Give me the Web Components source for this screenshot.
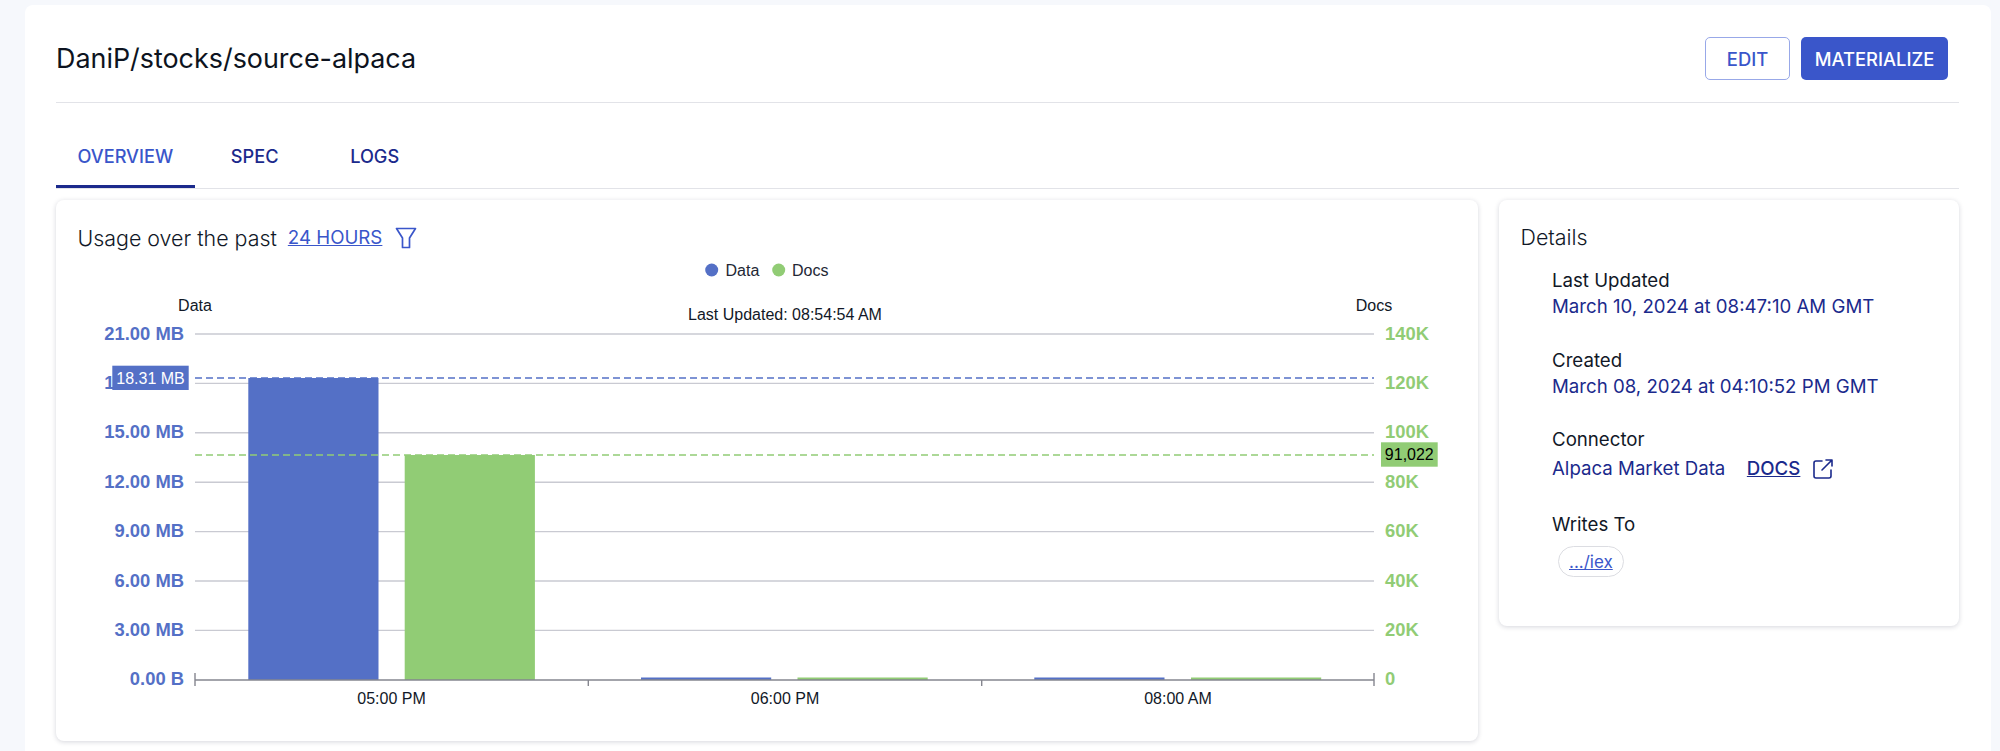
<!DOCTYPE html>
<html lang="en">
<head>
<meta charset="utf-8">
<title>DaniP/stocks/source-alpaca</title>
<style>
  html, body { margin: 0; height: 751px; overflow: hidden; background: #f6f8fc; }
  body { font-family: Inter, "Liberation Sans", sans-serif; color: #111827; }
</style>
</head>
<body>
<dp-page>
  <dp-title-bar>
    DaniP/stocks/source-alpaca
    <dp-button slot="actions" variant="outlined">EDIT</dp-button>
    <dp-button slot="actions" variant="contained">MATERIALIZE</dp-button>
  </dp-title-bar>
  <dp-tabs>
    <dp-tab active>OVERVIEW</dp-tab>
    <dp-tab>SPEC</dp-tab>
    <dp-tab>LOGS</dp-tab>
  </dp-tabs>
  <dp-columns>
    <dp-card>
      <dp-usage-title>Usage over the past</dp-usage-title>
      <dp-usage-chart></dp-usage-chart>
    </dp-card>
    <dp-card slot="side" style="height: 426px">
      <dp-details></dp-details>
    </dp-card>
  </dp-columns>
</dp-page>

<script>
/**
 * Small helper, defines a custom element with an open shadow root from markup.
 *
 * @param {string} name - The tag name.
 * @param {string} html - The shadow markup.
 */
function define (name, html) {
  const template = document.createElement('template')
  template.innerHTML = html
  customElements.define(name, class extends HTMLElement {
    constructor () {
      super()
      this.attachShadow({ mode: 'open' })
        .appendChild(template.content.cloneNode(true))
    }
  })
}

define('dp-page', `
  <style>
    :host {
      display: block;
      box-sizing: border-box;
      margin: 5px 9.5px 0 24.5px;
      height: 746px;
      padding: 0 31.5px;
      background: #fff;
      border-radius: 8px 8px 0 0;
    }
  </style>
  <slot></slot>
`)

define('dp-title-bar', `
  <style>
    :host {
      display: flex;
      align-items: center;
      justify-content: space-between;
      height: 98px;
      box-sizing: border-box;
      padding: 10px 11px 0 0;
      border-bottom: 1.5px solid #e2e3e8;
    }
    h1 { margin: 0 0 2px; font: 400 26.9px Inter, sans-serif; color: #0d1320; }
    .actions { display: flex; gap: 11px; }
  </style>
  <h1><slot></slot></h1>
  <div class="actions"><slot name="actions"></slot></div>
`)

define('dp-button', `
  <style>
    :host {
      display: flex;
      align-items: center;
      justify-content: center;
      box-sizing: border-box;
      height: 43px;
      padding: 0 13px;
      border-radius: 5px;
      font: 500 18.4px Inter, sans-serif;
    }
    :host([variant="outlined"]) {
      width: 85px;
      color: #3a56ca;
      border: 1.5px solid #98a8e8;
    }
    :host([variant="contained"]) {
      width: 147px;
      color: #fff;
      background: #3a56ca;
    }
  </style>
  <slot></slot>
`)

define('dp-tabs', `
  <style>
    :host {
      display: flex;
      height: 86px;
      box-sizing: border-box;
      padding-top: 21px;
      border-bottom: 1.5px solid #e2e3e8;
    }
  </style>
  <slot></slot>
`)

define('dp-tab', `
  <style>
    :host {
      display: flex;
      align-items: center;
      justify-content: center;
      box-sizing: border-box;
      height: 64px;
      min-width: 120px;
      padding: 0 21.5px;
      color: #1b2a8c;
      font: 500 18.2px Inter, sans-serif;
    }
    :host([active]) {
      color: #3a56ca;
      box-shadow: inset 0 -3px 0 #1b2a8c;
    }
  </style>
  <slot></slot>
`)

define('dp-columns', `
  <style>
    :host {
      display: grid;
      grid-template-columns: 1422px 460px;
      gap: 21px;
      align-items: start;
      margin-top: 11px;
    }
  </style>
  <slot></slot>
  <slot name="side"></slot>
`)

define('dp-card', `
  <style>
    :host {
      display: block;
      box-sizing: border-box;
      background: #fff;
      border-radius: 8px;
      box-shadow: 0 1px 5px rgba(20, 30, 60, .18);
    }
  </style>
  <slot></slot>
`)

define('dp-usage-title', `
  <style>
    :host {
      display: flex;
      align-items: center;
      height: 60px;
      box-sizing: border-box;
      padding: 15px 0 0 21.5px;
      font: 300 21.4px Inter, sans-serif;
      color: #111827;
    }
    a { margin-left: 11px; color: #3a56ca; font-weight: 400; font-size: 18.7px; }
    svg { margin-left: 13px; display: block; }
  </style>
  <slot></slot>
  <a href="#">24 HOURS</a>
  <svg width="22" height="22" viewBox="0 0 22 22" fill="none" stroke="#3a56ca" stroke-width="1.7" stroke-linejoin="round">
    <path d="M1.5 1.5 H20.5 L14.5 11 V20.5 H7.5 V11 Z"/>
  </svg>
`)

customElements.define('dp-usage-chart',
  /**
   * The bar chart, one svg with page coordinates in its viewBox.
   */
  class extends HTMLElement {
    /**
     * Creates an instance of the current type.
     */
    constructor () {
      super()
      this.attachShadow({ mode: 'open' })
      const blue = '#5470c6'
      const green = '#91cc75'
      const top = 334
      const step = 49.4
      const left = ['21.00 MB', '18.00 MB', '15.00 MB', '12.00 MB', '9.00 MB', '6.00 MB', '3.00 MB', '0.00 B']
      const right = ['140K', '120K', '100K', '80K', '60K', '40K', '20K', '0']
      let s = ''

      left.forEach((label, i) => {
        const y = top + i * step
        if (i < 7) s += `<line x1="195" x2="1374" y1="${y}" y2="${y}" stroke="#c9cad2" stroke-width="1.4"/>`
        s += `<text class="axis" x="184" y="${y + 5.5}" text-anchor="end" fill="${blue}">${label}</text>`
        s += `<text class="axis" x="1385" y="${y + 5.5}" fill="${green}">${right[i]}</text>`
      })

      const bars = [
        [248.3, 378, blue], [404.7, 455, green],
        [641, 677.5, blue], [797.5, 677.5, green],
        [1034.3, 677.5, blue], [1191, 677.5, green]
      ]
      bars.forEach(([x, y, fill]) => {
        s += `<rect x="${x}" y="${y}" width="130.2" height="${680 - y}" fill="${fill}"/>`
      })

      s += '<line x1="195" x2="1374" y1="680" y2="680" stroke="#85868f" stroke-width="1.6"/>'
      s += '<path d="M195 673V686M588.3 680V686M981.7 680V686M1374 673V686" stroke="#85868f" stroke-width="1.4" fill="none"/>'
      s += `<line x1="195" x2="1374" y1="378" y2="378" stroke="${blue}" stroke-width="1.6" stroke-dasharray="7 4"/>`
      s += `<line x1="195" x2="1374" y1="455" y2="455" stroke="${green}" stroke-width="1.6" stroke-dasharray="7 4"/>`

      s += `<rect x="112.3" y="365.7" width="76.4" height="24.3" fill="${blue}"/>`
      s += '<text x="150.5" y="383.5" text-anchor="middle" fill="#fff">18.31 MB</text>'
      s += `<rect x="1381" y="442.3" width="56.7" height="24.4" fill="${green}"/>`
      s += '<text x="1409.3" y="460" text-anchor="middle" fill="#000">91,022</text>'

      s += '<text x="391.5" y="703.5" text-anchor="middle">05:00 PM</text>'
      s += '<text x="785" y="703.5" text-anchor="middle">06:00 PM</text>'
      s += '<text x="1178" y="703.5" text-anchor="middle">08:00 AM</text>'
      s += '<text x="195" y="311" text-anchor="middle">Data</text>'
      s += '<text x="1374" y="311" text-anchor="middle">Docs</text>'
      s += '<text x="785" y="320" text-anchor="middle">Last Updated: 08:54:54 AM</text>'

      s += `<circle cx="711.7" cy="270" r="6.5" fill="${blue}"/>`
      s += '<text x="725.5" y="275.5" fill="#232735">Data</text>'
      s += `<circle cx="778.7" cy="270" r="6.5" fill="${green}"/>`
      s += '<text x="792" y="275.5" fill="#232735">Docs</text>'

      this.shadowRoot.innerHTML = `
        <style>
          :host { display: block; }
          svg { display: block; }
          text { font: 400 16px "Liberation Sans", Arial, sans-serif; }
          .axis { font-weight: 700; font-size: 18.4px; }
          text:not([fill]) { fill: #111827; }
        </style>
        <svg width="1422" height="481" viewBox="56 260 1422 481">${s}</svg>
      `
    }
  }
)

customElements.define('dp-detail-item',
  /**
   * One label with its value under it.
   */
  class extends HTMLElement {
    /**
     * Creates an instance of the current type.
     */
    constructor () {
      super()
      this.attachShadow({ mode: 'open' }).innerHTML = `
        <style>
          :host { display: block; margin-bottom: 27.5px; }
          .label { color: #111827; line-height: 26px; }
          .value { color: #1b2a8c; min-height: 26px; line-height: 26px; display: flex; align-items: center; }
          :host([tall]) { margin-bottom: 27px; }
          :host([tall]) .value { min-height: 32px; }
        </style>
        <div class="label"></div>
        <div class="value"><slot></slot></div>
      `
    }

    /**
     * Puts the label attribute in the shadow markup.
     */
    connectedCallback () {
      this.shadowRoot.querySelector('.label').textContent = this.getAttribute('label')
    }
  }
)

define('dp-details', `
  <style>
    :host {
      display: block;
      box-sizing: border-box;
      padding: 24px 21.5px;
      font: 400 18.67px Inter, sans-serif;
    }
    h2 { margin: 0 0 18px; font: 300 21.4px/26px Inter, sans-serif; color: #111827; }
    .list { padding-left: 31.5px; display: flex; flex-direction: column; }
  </style>
  <h2>Details</h2>
  <div class="list">
    <dp-detail-item label="Last Updated">March 10, 2024 at 08:47:10 AM GMT</dp-detail-item>
    <dp-detail-item label="Created">March 08, 2024 at 04:10:52 PM GMT</dp-detail-item>
    <dp-detail-item label="Connector" tall>
      Alpaca Market Data
      <dp-docs-link></dp-docs-link>
    </dp-detail-item>
    <dp-detail-item label="Writes To">
      <dp-chip>.../iex</dp-chip>
    </dp-detail-item>
  </div>
`)

define('dp-docs-link', `
  <style>
    :host { display: inline-flex; align-items: center; margin-left: 21.5px; color: #1b2a8c; }
    a { color: inherit; font-weight: 500; }
    svg { margin-left: 13px; display: block; }
  </style>
  <a href="#">DOCS</a>
  <svg width="20" height="20" viewBox="0 0 20 20" fill="none" stroke="#1b2a8c" stroke-width="1.6" stroke-linecap="round" stroke-linejoin="round">
    <path d="M9 2H3a2 2 0 0 0-2 2v13a2 2 0 0 0 2 2h13a2 2 0 0 0 2-2v-6"/>
    <path d="M9 11L19 1M13 1h6v6"/>
  </svg>
`)

define('dp-chip', `
  <style>
    :host {
      display: inline-flex;
      align-items: center;
      height: 31px;
      box-sizing: border-box;
      margin: 8px 0 0 6px;
      padding: 0 10px;
      border: 1px solid #dcdde2;
      border-radius: 16px;
      font-size: 17px;
    }
    a { color: #3a56ca; }
  </style>
  <a href="#"><slot></slot></a>
`)
</script>
</body>
</html>
